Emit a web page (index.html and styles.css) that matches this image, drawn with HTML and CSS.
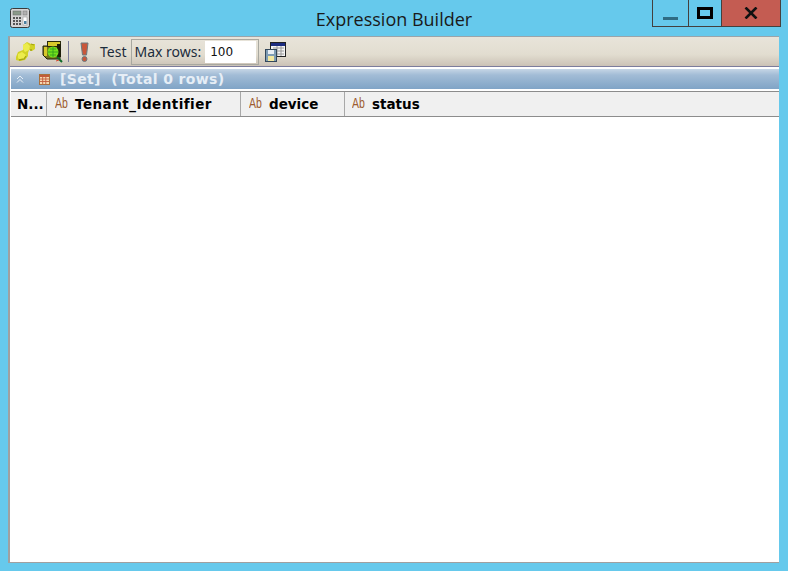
FILE: index.html
```html
<!DOCTYPE html>
<html lang="en">
<head>
<meta charset="utf-8">
<title>Expression Builder</title>
<link rel="stylesheet" href="styles.css">
</head>
<body>
<div class="window">
  <header class="titlebar">
    <svg class="app-icon" width="20" height="20" viewBox="0 0 20 20">
      <rect x="0.5" y="0.5" width="19" height="19" rx="2" fill="#d4d4d4" stroke="#3a3a3a"/>
      <rect x="3" y="3" width="8" height="4" fill="#8a9a8a" stroke="#666" stroke-width="0.5"/>
      <rect x="13" y="3" width="4" height="4" fill="#b0b0b0" stroke="#777" stroke-width="0.5"/>
      <path d="M3 9h2v2H3zM6 9h2v2H6zM9 9h2v2H9zM3 12h2v2H3zM6 12h2v2H6zM9 12h2v2H9zM3 15h2v2H3zM6 15h2v2H6zM9 15h2v2H9z" fill="#555"/>
      <rect x="13" y="9" width="4" height="8" fill="#fff" stroke="#888" stroke-width="0.5"/>
      <rect x="14" y="13" width="2.5" height="3" fill="#4a7fa0"/>
    </svg>
    <h1 class="title">Expression Builder</h1>
    <div class="caption">
      <div class="cap cap-min"><span class="min-bar"></span></div>
      <div class="cap cap-max"><span class="max-box"></span></div>
      <div class="cap cap-close">
        <svg width="14" height="12" viewBox="0 0 14 12"><path d="M1.5 0.5L12.5 11.5M12.5 0.5L1.5 11.5" stroke="#111" stroke-width="2.6" fill="none"/></svg>
      </div>
    </div>
  </header>
  <main class="client">
    <div class="toolbar">
      <svg class="tool-icon keys" width="21" height="20" viewBox="0 0 21 20">
        <path d="M1 15l2-5 5-2 0-5 4-3 4 2 4 0 0 5-3 2-3-1-1 3 0 3-3 4-5 1-4-1z" fill="#d2d226"/>
        <path d="M8 3l4-2 3 3-1 4-4 2-2-3zM3 12l4-2 4 3-2 4-4 1-2-2z" fill="#ecec4c"/>
        <path d="M15 8l2 0M4 18l5-1 2-3M16 2l3 1" stroke="#a4a414" stroke-width="1.3" fill="none"/>
      </svg>
      <svg class="tool-icon" width="21" height="22" viewBox="0 0 21 22">
        <path d="M1 5h17v13H5l-4-4z" fill="#74741a" stroke="#20200a"/>
        <rect x="5.5" y="0.5" width="13" height="5" fill="#d8c82a" stroke="#2a2a0a"/>
        <rect x="15" y="3" width="4" height="13" fill="#1c1c08"/>
        <rect x="2" y="6" width="3" height="9" fill="#d8c82a"/>
        <circle cx="11" cy="11" r="5.5" fill="#74e01c"/>
        <path d="M11 6v10M6 11h10M8 8h6M8 14h6" stroke="#2c9a20" stroke-width="0.8"/>
        <path d="M15 16l5 5" stroke="#0e6a28" stroke-width="2"/>
        <path d="M14 20l3-1" stroke="#d84a30" stroke-width="1"/>
      </svg>
      <span class="sep"></span>
      <svg class="tool-icon bang" width="9" height="20" viewBox="0 0 9 20">
        <path d="M1 1h7L6.5 13h-4z" fill="#c9573a" stroke="#6a7a80" stroke-width="1"/>
        <circle cx="4.5" cy="17" r="2.5" fill="#c9573a" stroke="#6a7a80"/>
      </svg>
      <span class="tool-text">Test</span>
      <div class="maxrows">
        <label class="tool-text" for="mr">Max rows:</label>
        <input id="mr" class="maxinput" type="text" value="100">
      </div>
      <svg class="tool-icon" width="21" height="20" viewBox="0 0 21 20">
        <rect x="5.5" y="0.5" width="15" height="14" fill="#f4f4f4" stroke="#222"/>
        <rect x="6" y="1" width="14" height="3" fill="#1c2c80"/>
        <path d="M8 6h11M8 9h11M8 12h11M12 4v10M16 4v10" stroke="#9a9a9a" stroke-width="1"/>
        <rect x="0.5" y="7.5" width="11" height="12" fill="#7e9cb4" stroke="#33475a"/>
        <rect x="3" y="8" width="6" height="4" fill="#e8eef4"/>
        <rect x="3" y="14" width="6" height="5" fill="#f2e8a0"/>
      </svg>
    </div>
    <div class="rule"></div>
    <div class="section">
      <svg class="chev" width="8" height="8" viewBox="0 0 8 8"><path d="M1 4l3-3 3 3M1 7.5l3-3 3 3" stroke="#e6eef6" stroke-width="1" fill="none"/></svg>
      <svg class="set-icon" width="11" height="11" viewBox="0 0 11 11">
        <rect x="0.5" y="0.5" width="10" height="10" fill="#f6d8b0" stroke="#a8703c"/>
        <rect x="1" y="1" width="9" height="2" fill="#c25a3a"/>
        <path d="M1 5h9M1 7.5h9M3.7 3v7M6.8 3v7" stroke="#c25a3a" stroke-width="0.9"/>
      </svg>
      <span class="section-text">[Set]&nbsp; (Total 0 rows)</span>
    </div>
    <div class="grid">
      <div class="head">
        <div class="col col-n"><span class="col-name">N...</span></div>
        <div class="col col-a"><span class="ab">Ab</span><span class="col-name col-name-wide">Tenant_Identifier</span></div>
        <div class="col col-b"><span class="ab">Ab</span><span class="col-name">device</span></div>
        <div class="col col-c"><span class="ab">Ab</span><span class="col-name">status</span></div>
      </div>
    </div>
  </main>
</div>
</body>
</html>
```
FILE: styles.css
```css
* { box-sizing: border-box; }
html, body { margin: 0; padding: 0; }
body { background: #66c9ec; overflow: hidden; }
.window { width: 788px; height: 571px; display: flex; flex-direction: column; padding-bottom: 8px; }
.titlebar { height: 36px; flex: none; display: flex; align-items: flex-start; position: relative; }
.app-icon { margin: 8px 0 0 10px; }
.title {
  position: absolute; left: 0; right: 0; top: 7px; margin: 0; text-align: center;
  font: 400 18px/24px "Open Sans", "Noto Sans", sans-serif; color: #1a1a1a;
}
.caption { margin-left: auto; margin-right: 7px; display: flex; height: 27px; position: relative; }
.cap { height: 27px; display: flex; align-items: center; justify-content: center; border: 1px solid #44403e; border-top: 0; border-right: 0; }
.cap-min { width: 36px; }
.cap-max { width: 33px; }
.cap-close { width: 60px; background: #c45c52; border-right: 1px solid #44403e; }
.min-bar { width: 15px; height: 3px; background: #2f6c84; margin-top: 10px; }
.max-box { width: 16px; height: 12px; border: 3px solid #000; margin-top: -1px; }
.client {
  flex: 1; margin: 0 9px 0 8px; display: flex; flex-direction: column;
  background: #fff; border-top: 1px solid #9aa4aa; border-left: 2px solid #a0a0a0; border-bottom: 1px solid #a0a0a0;
}
.toolbar {
  height: 29px; flex: none; display: flex; align-items: center; padding-left: 5px;
  background: linear-gradient(#e8e4da, #e2ddd0 60%, #cbc2b6);
}
.tool-icon { flex: none; }
.keys { margin-right: 6px; }
.sep { width: 1px; height: 21px; background: #7c7c9c; margin: 0 11px 0 5px; }
.bang { margin-right: 11px; }
.tool-text { font: 400 14px/20px "Noto Sans", sans-serif; color: #1c2c3c; }
.maxrows {
  display: flex; align-items: center; height: 26px; width: 128px; margin: 0 6px 0 5px; padding-left: 2px;
  border: 1px solid #a8a8a0; gap: 4px;
}
.maxinput {
  width: 51px; height: 22px; border: 0; background: #fff; padding: 0 0 0 5px; margin: 0; outline: 0;
  font: 400 12px/20px "DejaVu Sans", sans-serif; color: #111;
}
.rule { height: 3px; flex: none; border-top: 1px solid #7c7c9c; background: #fff; }
.section {
  height: 20px; flex: none; display: flex; align-items: center; margin-left: 1px; padding-left: 5px;
  background: linear-gradient(#c6d6e6, #a2bcd6 30%, #80a4c6);
}
.chev { margin-right: 15px; }
.set-icon { margin-right: 10px; }
.section-text { font: 700 14px/20px "DejaVu Sans", sans-serif; letter-spacing: 0.35px; color: #e6eef6; white-space: pre; }
.grid { flex: 1; margin: 2px 0 0 1px; border-top: 1px solid #8c8c8c; }
.head { height: 25px; display: flex; background: #f0f0f0; border-bottom: 1px solid #8c8c8c; }
.col { display: flex; align-items: center; height: 100%; border-right: 1px solid #a8a8a8; padding-left: 6px; }
.col-n { width: 36px; }
.col-a { width: 194px; padding-left: 8px; }
.col-b { width: 104px; padding-left: 8px; }
.col-c { flex: 1; border-right: 0; padding-left: 7px; }
.col-name { font: 700 13.5px/20px "DejaVu Sans", sans-serif; color: #000; white-space: nowrap; }
.col-name-wide { letter-spacing: 0.47px; }
.ab {
  display: block; width: 20px; flex: none; margin-top: -2px;
  font: 400 15px/14px "Liberation Sans", sans-serif; color: #9c5c30;
  transform: scaleX(0.7); transform-origin: left center;
}
```
